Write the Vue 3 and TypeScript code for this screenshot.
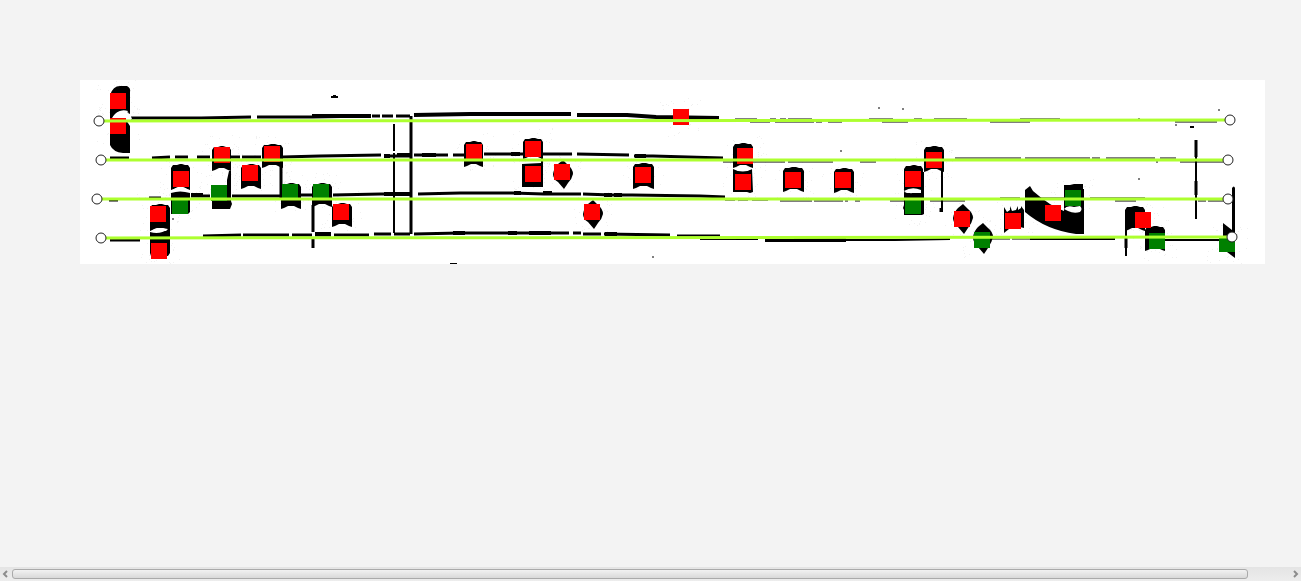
<script setup lang="ts">
type Marker = { x: number; y: number; kind: 'line' | 'space' }
type Guide = { x1: number; y1: number; x2: number; y2: number }
type Stroke = { d: string; w: number }

const markerSize = 16

// Square note heads: left, top, right, bottom
const heads: number[][] = [
  [171, 164, 190, 190], [150, 204, 170, 231],
  [212, 146, 231, 171], [241, 164, 261, 189], [262, 144, 283, 168],
  [281, 183, 301, 209], [312, 183, 332, 207], [332, 203, 352, 227],
  [464, 141, 483, 167], [523, 138, 543, 159], [633, 163, 654, 189],
  [733, 143, 753, 168], [783, 167, 804, 192], [834, 168, 854, 193],
  [904, 165, 923, 192], [924, 146, 944, 172],
  [1125, 206, 1145, 231], [1145, 226, 1165, 251]
]

const diamonds: number[][] = [[563, 160, 189], [593, 200, 229], [963, 204, 234], [983, 223, 254]]

const headPath = ([l, t, r, b]: number[]): string =>
  `M${l} ${b}V${t + 4}L${l + 2} ${t + 1}H${l + 6}L${l + 9} ${t}H${r - 8}L${r - 5} ${t + 1}H${r - 2}L${r} ${t + 4}V${b}L${r - 3} ${b - 1}L${r - 7} ${b - 3}H${l + 7}L${l + 3} ${b - 1}Z`

const diamondPath = ([c, t, b]: number[]): string =>
  `M${c} ${t}L${c + 5} ${t + 5}Q${c + 10} ${t + 9} ${c + 10} ${t + 14}Q${c + 9} ${t + 19} ${c + 5} ${b - 6}L${c + 1} ${b}L${c - 5} ${b - 7}Q${c - 10} ${t + 19} ${c - 10} ${t + 14}Q${c - 9} ${t + 8} ${c - 5} ${t + 4}Z`

const shapes: string[] = [
  'M110 95Q113 86 120 86H127Q131 88 130 92V115Q126 113 128 111Q119 108 113 117V120H126L130 126V153H123Q113 152 110 145Z',
  'M171 193Q180 190 190 193V212L188 214H171ZM150 232Q160 235 168 229L170 228V253L168 256H151L150 253Z',
  'M212 186L227 185V180L229 171H231V201L232 204L230 209H212Z',
  'M522 164L541 163V158H543V187H522Z',
  'M733 169Q743 174 752 169L753 192L750 193L747 192H733Z',
  'M904 192Q914 195 921 190V172H924V214L922 215H904V210L903 208L904 205Z',
  'M1004 207L1007 212L1010 210V206L1012 211L1016 210L1018 206V210L1021 208V206L1024 210V228L1020 227L1009 229L1004 233Z',
  'M1025 190L1030 186L1033 191Q1050 206 1064 211V185H1070L1074 184H1083V189H1084V234H1076Q1046 230 1025 212Z',
  'M1223 223L1232 230V188Q1234 185 1235 188V258L1227 252H1223Z'
]

const strokes: Stroke[] = [
  { d: 'M394 124V151M394 153V233', w: 2 },
  { d: 'M411 116V234', w: 3 },
  { d: 'M281 165V199', w: 3 },
  { d: 'M313 205V232M313 239V248', w: 3 },
  { d: 'M942 170V212M1126 229V256M1196 140V219', w: 2 },
  { d: 'M1196 140V157M1196 181V195M1126 238V248M941 208V212', w: 3 },
  { d: 'M131 118H201L251 117M257 117L312 117L371 116M372 116H380M382 116H393M396 116H410', w: 3 },
  { d: 'M312 116L371 116M414 115L470 114H571M577 115L627 115L656 117L719 118', w: 4 },
  { d: 'M110 158H129M152 158L170 157M175 157H188M197 157H210M231 157H240M242 157H261M283 157L320 156L381 155M384 156H410M414 155H448M453 155H464M484 154H572M577 154L629 155M634 156L653 156L723 158', w: 3 },
  { d: 'M384 156H390M397 155H410M422 155H436M511 154H520M635 156H646', w: 4 },
  { d: 'M109 200H118M149 198H161M191 196H210M232 196H281M301 195H312M333 195L381 194H410M418 194L460 193H512L544 194H581M583 194L612 195H632L700 196L725 197', w: 3 },
  { d: 'M191 195H203M384 194H410M514 193H521M543 193H552M604 195H612M614 195H622', w: 4 },
  { d: 'M110 240H140M203 236L241 235M243 235H289M292 235H312M315 235H331M334 235H369M374 234H391M394 234H410M414 234L460 233H569M573 233H581M583 234H601M604 234L670 235M677 236H720', w: 3 },
  { d: 'M315 234H331M453 233H465M508 233H517M529 233H551M605 234H617M765 240H846', w: 4 },
  { d: 'M700 239H758M765 240H895L950 239M1030 239H1115M1165 240H1220', w: 2 },
  { d: 'M331 97H338M1190 127H1194M450 264H457', w: 2 },
  { d: 'M333 96H336', w: 2 },
  { d: 'M878 108H880M902 109H904M840 151H842M1138 179H1140M1218 110H1220M652 257H654M172 219H174M1175 125H1177', w: 1 }
]

// Thin staff remains that peek out along the fitted guides
const traces: string[] = [
  'M735 119H757M770 119H776M780 119H786M788 119H812M869 119H893M914 119H922M934 119H967M1020 119H1060M1138 119H1140',
  'M750 122H770M775 122H814M816 122H822M828 122H842M882 122H908M990 122H1030M1175 122H1217',
  'M723 162H745M752 162H785M788 162H833M860 162H876M1156 162H1158M1180 162H1223',
  'M955 158H1021M1025 158H1090M1092 158H1100M1106 158H1155M1160 158H1176',
  'M725 200H735M738 200H748M752 200H768M780 201H812M814 201H843M845 201H848M855 201H860M890 201H904M930 201H965M1115 201H1136M1198 201H1206M1208 201H1223',
  'M1000 198H1020M1033 198H1064M1090 198H1145M985 239H1010M1012 239H1030'
]

const gaps: string[] = [
  'M112 118Q116 111 122 111Q127 112 130 114L132 119Z',
  'M151 231Q156 226 168 229L166 231H157Z',
  'M172 190Q181 184 189 190L186 191H174Z',
  'M735 169Q743 164 752 169L746 171H738Z',
  'M904 191Q912 186 921 190V193H907Z',
  'M1064 209Q1067 205 1074 207L1080 206Q1083 209 1080 212Q1074 214 1068 211Z'
]

const red: number[][] = [
  [110, 93], [110, 118], [173, 171], [150, 206], [151, 243], [214, 147], [242, 165], [264, 146],
  [333, 204], [466, 144], [525, 141], [525, 166], [554, 164], [584, 204], [673, 109], [635, 167],
  [737, 148], [735, 174], [785, 172], [835, 172], [905, 171], [926, 152], [954, 211], [1005, 213],
  [1045, 205], [1135, 212]
]
const green: number[][] = [
  [172, 198], [211, 185], [282, 184], [313, 184], [905, 198], [974, 232], [1065, 190], [1149, 233], [1219, 236]
]
const toMarker = (kind: Marker['kind']) => ([x, y]: number[]): Marker => ({ x, y, kind })
const markers: Marker[] = [...red.map(toMarker('line')), ...green.map(toMarker('space'))]

const guides: Guide[] = [
  { x1: 99, y1: 121, x2: 1230, y2: 120 },
  { x1: 101, y1: 160, x2: 1228, y2: 160 },
  { x1: 97, y1: 199, x2: 1228, y2: 199 },
  { x1: 101, y1: 238, x2: 1232, y2: 237 }
]

// Faint scanner grain scattered around each note head
const grain = ((): string => {
  let seed = 17
  const next = (): number => {
    seed = (seed * 16807) % 2147483647
    return seed / 2147483647
  }
  return [...red, ...green]
    .map(([x, y]) => Array.from({ length: 34 }, () =>
      `M${Math.round(x - 13 + next() * 42)} ${Math.round(y - 13 + next() * 40)}h1v1h-1z`).join(''))
    .join('')
})()
</script>

<template>
  <main class="viewer">
    <section class="sheet">
      <svg class="score" viewBox="80 80 1185 184" role="img" aria-label="Annotated chant staff">
        <path class="grain" :d="grain" />
        <g class="ink">
          <path v-for="(h, i) in heads" :key="'h' + i" :d="headPath(h)" />
          <path v-for="(d, i) in diamonds" :key="'d' + i" :d="diamondPath(d)" />
          <path v-for="(s, i) in shapes" :key="'s' + i" :d="s" />
        </g>
        <path v-for="(s, i) in strokes" :key="'k' + i" class="stroke" :d="s.d" :stroke-width="s.w" />
        <path v-for="(t, i) in traces" :key="'t' + i" class="stroke trace" :d="t" />
        <path v-for="(g, i) in gaps" :key="'g' + i" class="gap" :d="g" />
        <rect v-for="(m, i) in markers" :key="'m' + i" :class="m.kind" :x="m.x" :y="m.y" :width="markerSize" :height="markerSize" />
        <line v-for="(g, i) in guides" :key="'l' + i" class="guide" v-bind="g" />
        <g v-for="(g, i) in guides" :key="'c' + i" class="handle">
          <circle :cx="g.x1" :cy="g.y1" r="5" />
          <circle :cx="g.x2" :cy="g.y2" r="5" />
        </g>
      </svg>
    </section>
    <footer class="scrollbar">
      <button class="arrow" type="button" aria-label="Scroll left">
        <svg viewBox="0 0 12 14"><path d="M7 4L4 7L7 10" /></svg>
      </button>
      <div class="track"><div class="thumb"></div></div>
      <button class="arrow" type="button" aria-label="Scroll right">
        <svg viewBox="0 0 12 14"><path d="M5 4L8 7L5 10" /></svg>
      </button>
    </footer>
  </main>
</template>

<style>
body {
  margin: 0;
  background: #f3f3f3;
}
</style>

<style scoped>
.viewer {
  display: flex;
  flex-direction: column;
  justify-content: space-between;
  min-height: 100vh;
  background: #f3f3f3;
  font-family: "Liberation Sans", sans-serif;
}
.sheet {
  margin: 80px 36px 0 80px;
  background: #fff;
}
.score {
  display: block;
  width: 100%;
}
.grain {
  fill: #f0f0f0;
}
.ink {
  fill: #000;
}
.stroke {
  fill: none;
  stroke: #000;
}
.trace {
  stroke-width: 1;
}
.gap {
  fill: #fff;
}
.line {
  fill: #f00;
}
.space {
  fill: #008000;
}
.guide {
  stroke: #adff2f;
  stroke-width: 3;
}
.handle {
  fill: #fff;
  stroke: #222;
  stroke-width: 1;
}
.scrollbar {
  display: flex;
  height: 14px;
  background: linear-gradient(#e4e4e4, #ededed);
}
.arrow {
  width: 12px;
  height: 14px;
  padding: 0;
  border: 0;
  background: transparent;
}
.arrow svg {
  display: block;
  width: 12px;
  height: 14px;
  fill: none;
  stroke: #8c8c8c;
  stroke-width: 2;
}
.track {
  flex: 1;
  padding: 2px 0;
}
.thumb {
  box-sizing: border-box;
  width: 96.8%;
  height: 10px;
  border: 1px solid #aaa;
  border-radius: 3px;
  background: linear-gradient(#f2f2f2, #d9d9d9);
}
</style>
